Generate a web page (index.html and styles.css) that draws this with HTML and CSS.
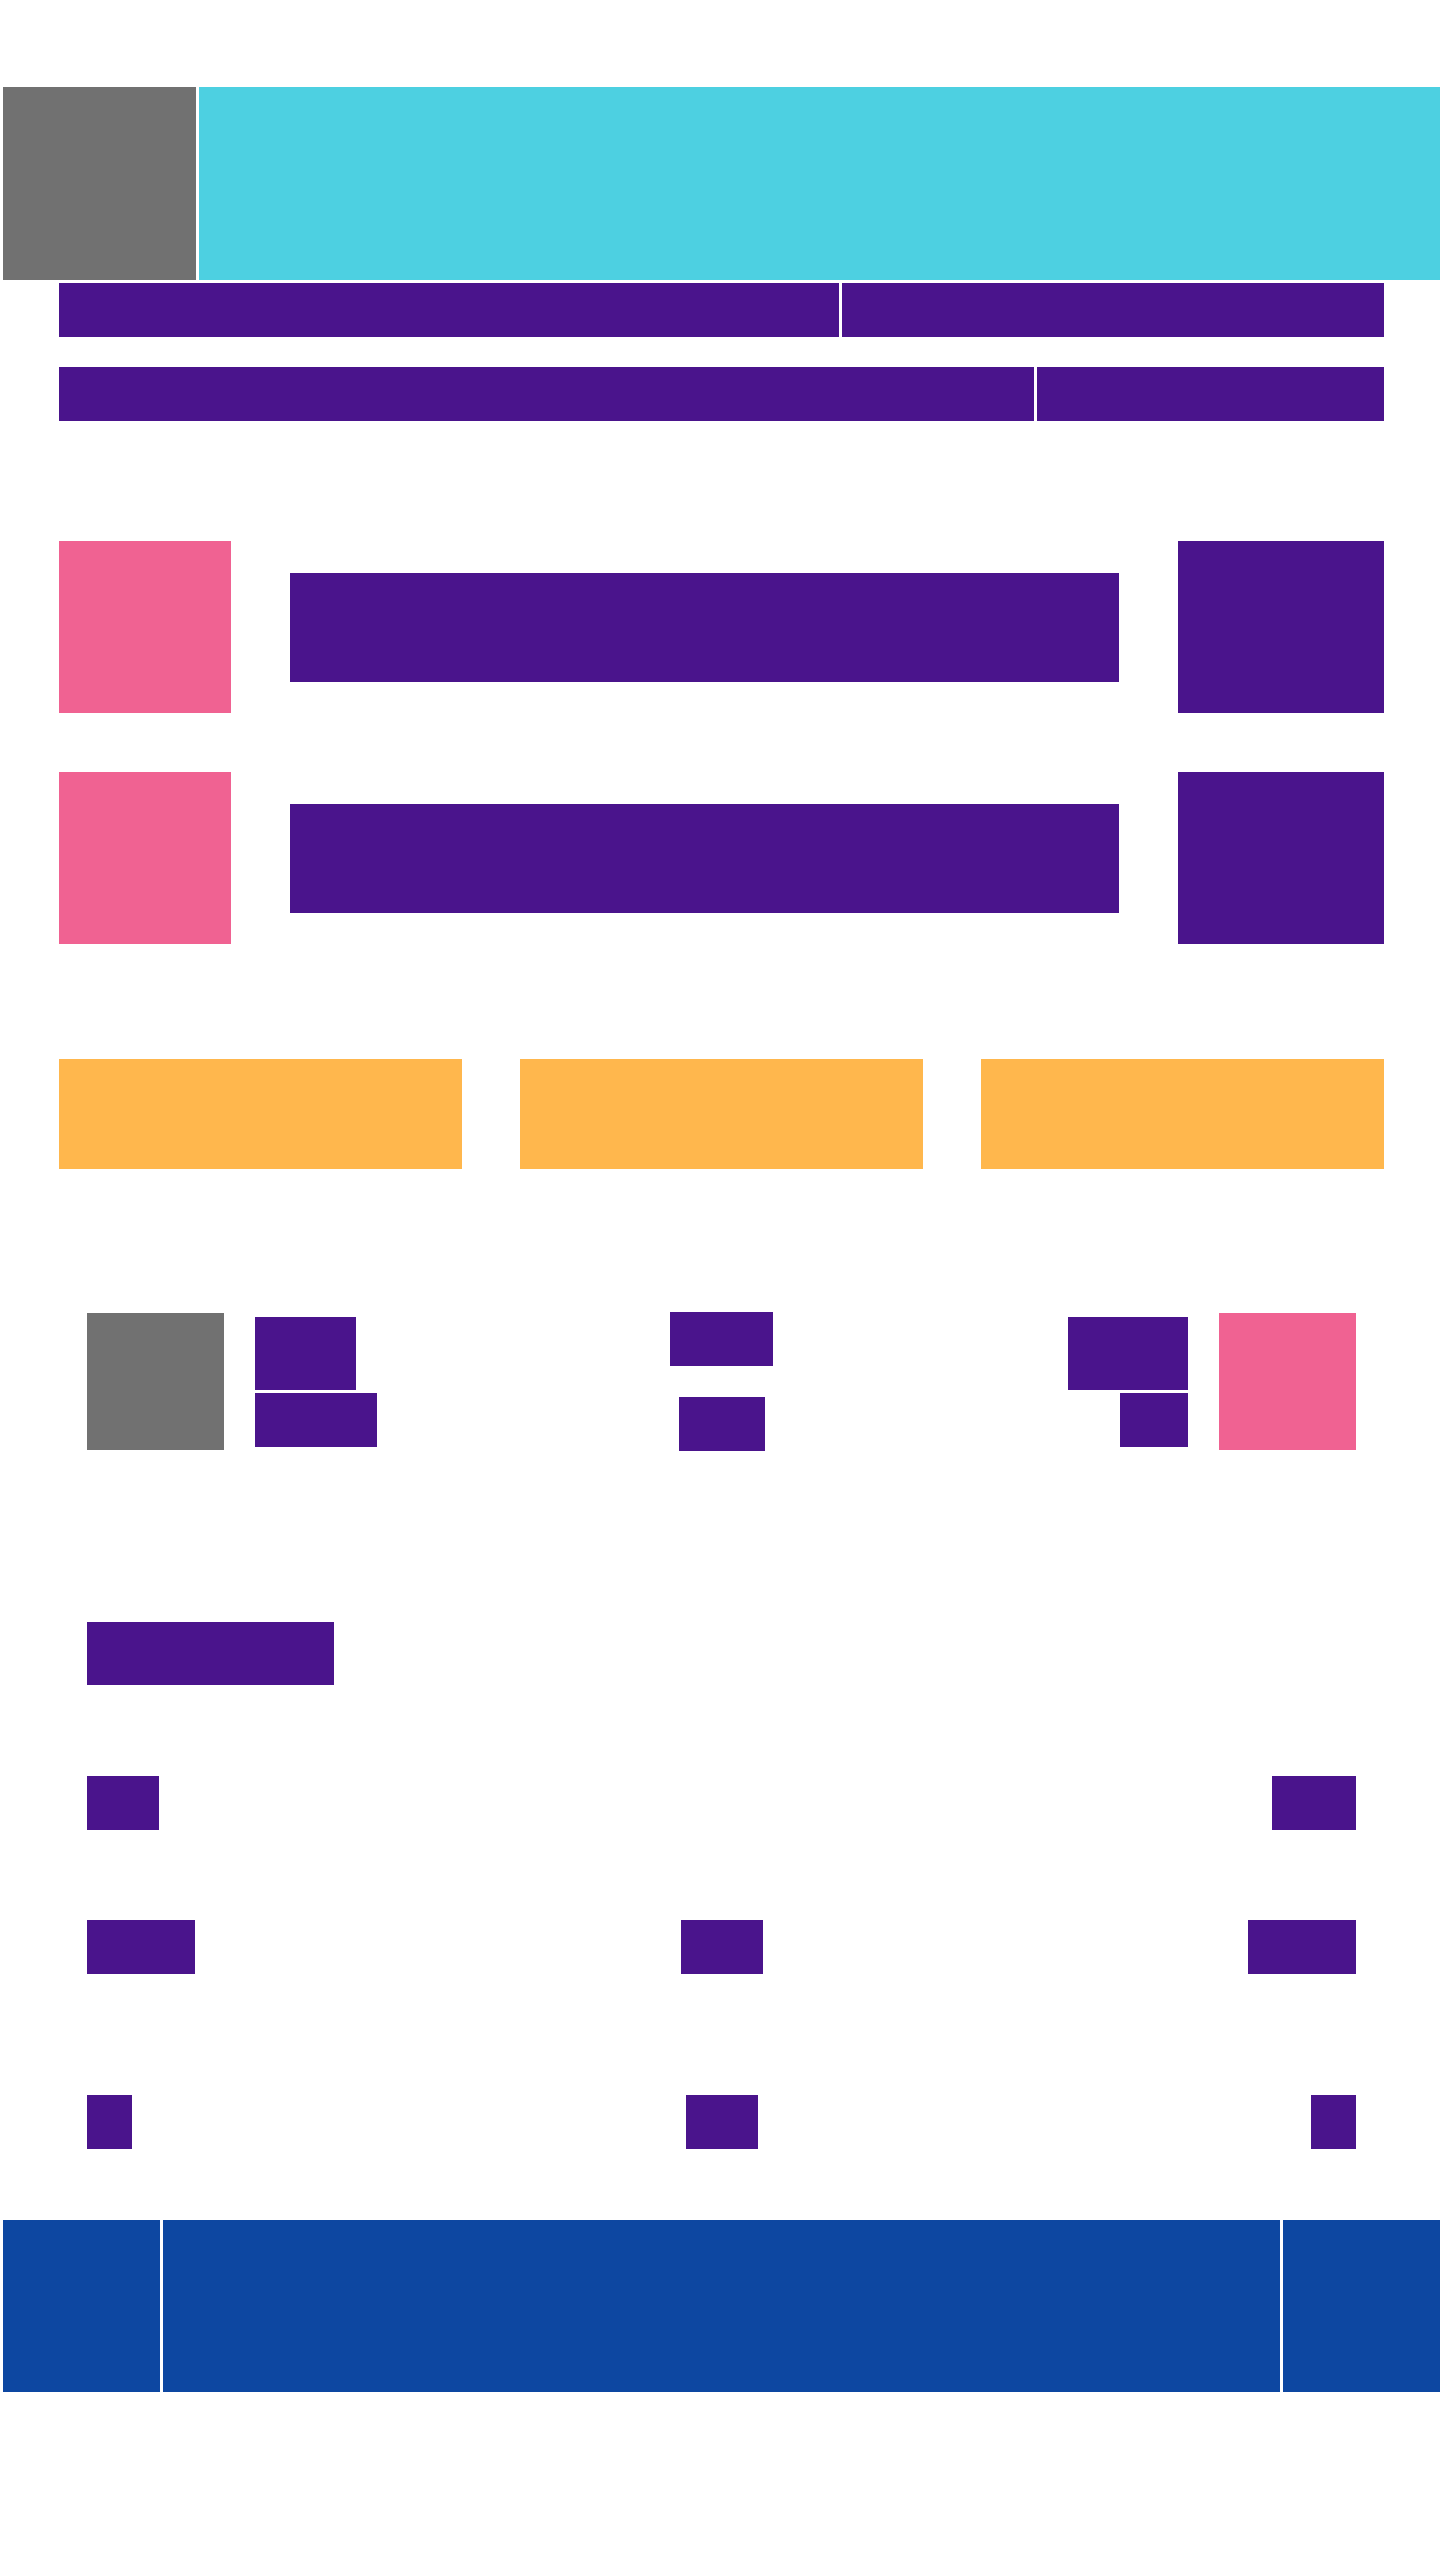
FILE: index.html
```html
<!DOCTYPE html>
<html lang="en">
<head>
    <meta charset="UTF-8">
    <meta name="viewport" content="width=device-width, initial-scale=1.0">
    <title>Wireframe</title>
    <link rel="stylesheet" href="styles.css">
</head>
<body>
    <header class="top">
        <div class="logo"></div>
        <div class="banner"></div>
    </header>

    <div class="main">
        <div class="bars">
            <div class="bar bar-wide"></div>
            <div class="bar bar-rest"></div>
        </div>
        <div class="bars bars-second">
            <div class="bar bar-wider"></div>
            <div class="bar bar-rest"></div>
        </div>

        <div class="list">
            <div class="list-item">
                <div class="thumb"></div>
                <div class="line"></div>
                <div class="action"></div>
            </div>
            <div class="list-item">
                <div class="thumb"></div>
                <div class="line"></div>
                <div class="action"></div>
            </div>
        </div>

        <div class="cards">
            <div class="card"></div>
            <div class="card"></div>
            <div class="card"></div>
        </div>

        <div class="profile">
            <div class="side side-left">
                <div class="avatar"></div>
                <div class="names">
                    <div class="name" style="width: 101px"></div>
                    <div class="sub" style="width: 122px"></div>
                </div>
            </div>
            <div class="middle">
                <div class="cell" style="width: 103px"></div>
                <div class="cell" style="width: 86px"></div>
            </div>
            <div class="side side-right">
                <div class="names names-right">
                    <div class="name" style="width: 120px"></div>
                    <div class="sub" style="width: 68px"></div>
                </div>
                <div class="avatar avatar-pink"></div>
            </div>
        </div>

        <div class="stats">
            <div class="stats-title"></div>
            <div class="stats-row row-1">
                <div class="col-left"><div class="cell" style="width: 72px"></div></div>
                <div class="col-mid"></div>
                <div class="col-right"><div class="cell" style="width: 84px"></div></div>
            </div>
            <div class="stats-row row-2">
                <div class="col-left"><div class="cell" style="width: 108px"></div></div>
                <div class="col-mid"><div class="cell" style="width: 82px"></div></div>
                <div class="col-right"><div class="cell" style="width: 108px"></div></div>
            </div>
            <div class="stats-row row-3">
                <div class="col-left"><div class="cell" style="width: 45px"></div></div>
                <div class="col-mid"><div class="cell" style="width: 72px"></div></div>
                <div class="col-right"><div class="cell" style="width: 45px"></div></div>
            </div>
        </div>
    </div>

    <footer class="bottom">
        <div class="foot-side"></div>
        <div class="foot-mid"></div>
        <div class="foot-side"></div>
    </footer>
</body>
</html>
```

FILE: styles.css
```css
body {
    font-family: "Liberation Sans", Arial, sans-serif;
    margin: 0;
    padding-top: 87px;
    background: #fff;
}
.top {
    display: flex;
    gap: 3px;
    margin-left: 3px;
    height: 193px;
}
.logo {
    width: 193px;
    background-color: #717171;
}
.banner {
    flex: 1;
    background-color: #4dd0e1;
}
.main {
    margin-left: 59px;
    width: 1325px;
}
.bars {
    display: flex;
    gap: 3px;
    height: 54px;
    margin-top: 3px;
}
.bars-second {
    margin-top: 30px;
}
.bar {
    background-color: #4a148c;
}
.bar-wide {
    width: 780px;
}
.bar-wider {
    width: 975px;
}
.bar-rest {
    flex: 1;
}
.list {
    margin-top: 120px;
}
.list-item {
    display: flex;
    align-items: center;
    gap: 59px;
    margin-bottom: 59px;
}
.list-item:last-child {
    margin-bottom: 0;
}
.thumb {
    width: 172px;
    height: 172px;
    background-color: #f06292;
}
.line {
    flex: 1;
    height: 109px;
    background-color: #4a148c;
}
.action {
    width: 206px;
    height: 172px;
    background-color: #4a148c;
}
.cards {
    display: grid;
    grid-template-columns: 1fr 1fr 1fr;
    gap: 58px;
    margin-top: 115px;
}
.card {
    height: 110px;
    background-color: #ffb74d;
}
.profile {
    display: grid;
    grid-template-columns: 1fr auto 1fr;
    align-items: center;
    padding: 0 28px;
    margin-top: 143px;
}
.side {
    display: flex;
    align-items: center;
    gap: 31px;
}
.side-right {
    justify-content: flex-end;
}
.avatar {
    width: 137px;
    height: 137px;
    background-color: #717171;
}
.avatar-pink {
    background-color: #f06292;
}
.names {
    display: flex;
    flex-direction: column;
    gap: 3px;
}
.names-right {
    align-items: flex-end;
}
.name {
    height: 73px;
    background-color: #4a148c;
}
.sub {
    height: 54px;
    background-color: #4a148c;
}
.middle {
    display: flex;
    flex-direction: column;
    align-items: center;
    gap: 31px;
}
.cell {
    height: 54px;
    background-color: #4a148c;
}
.stats {
    padding: 0 28px;
    margin-top: 171px;
}
.stats-title {
    width: 247px;
    height: 63px;
    background-color: #4a148c;
}
.stats-row {
    display: grid;
    grid-template-columns: 1fr auto 1fr;
    height: 54px;
}
.row-1 {
    margin-top: 91px;
}
.row-2 {
    margin-top: 90px;
}
.row-3 {
    margin-top: 121px;
}
.col-mid {
    display: flex;
    justify-content: center;
}
.col-right {
    display: flex;
    justify-content: flex-end;
}
.bottom {
    display: flex;
    gap: 3px;
    margin-left: 3px;
    margin-top: 71px;
    height: 172px;
}
.foot-side {
    width: 157px;
    background-color: #0d47a1;
}
.foot-mid {
    flex: 1;
    background-color: #0d47a1;
}
```
